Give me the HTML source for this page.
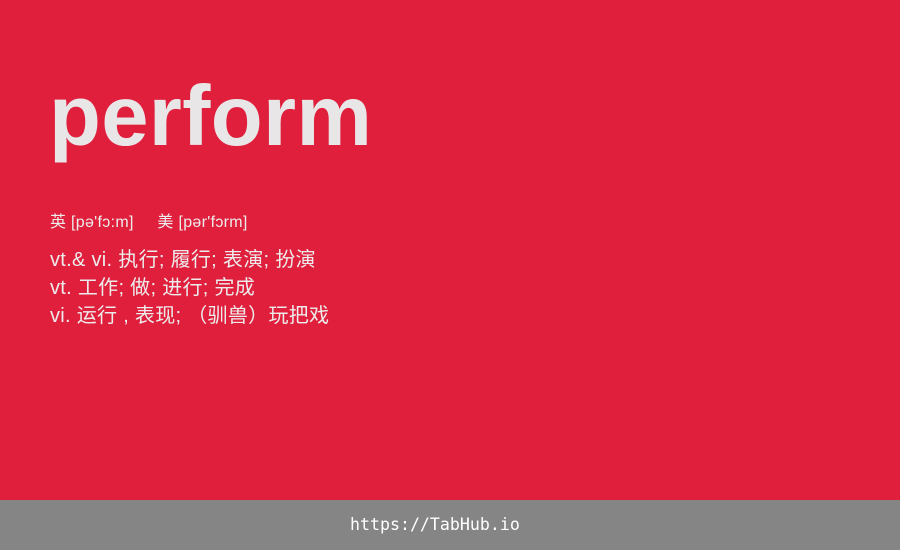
<html><head><style>
body{margin:0;width:900px;height:550px;background:#e01f3d;position:relative;overflow:hidden;font-family:"Liberation Sans","Noto Sans CJK SC",sans-serif;color:#ececec}
h1{position:absolute;left:49px;top:62px;margin:0;font-size:85px;font-weight:bold;line-height:110px;color:#e9e6e8;letter-spacing:0.3px}
.ph{position:absolute;left:50px;top:212px;font-size:16px;line-height:22px;letter-spacing:0.3px}
.d{position:absolute;left:50px;top:246px;font-size:20px;line-height:28px;letter-spacing:0.3px}
.f{position:absolute;left:0;top:500px;width:900px;height:50px;background:#858585;color:#fff;font-family:"DejaVu Sans Mono",monospace;font-size:16.6px;line-height:50px}
.f span{position:absolute;left:350px}
</style></head><body>
<h1>perform</h1>
<div class="ph">英 [pə'fɔ:m]&nbsp;&nbsp;&nbsp;&nbsp; 美 [pər'fɔrm]</div>
<div class="d">vt.&amp; vi. 执行; 履行; 表演; 扮演<br>vt. 工作; 做; 进行; 完成<br>vi. 运行 , 表现; （驯兽）玩把戏</div>
<div class="f"><span>https://TabHub.io</span></div>
</body></html>
